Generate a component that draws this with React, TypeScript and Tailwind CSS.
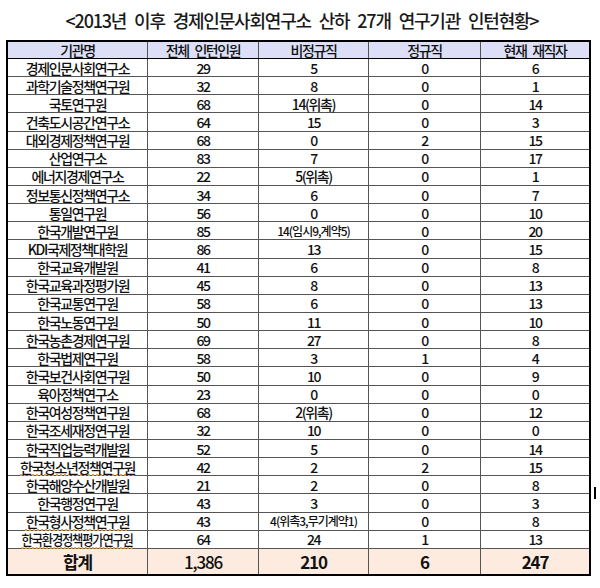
import React from "react";

type Row = [string, string, string, string, string];

const rows: Row[] = [
  ["경제인문사회연구소", "29", "5", "0", "6"],
  ["과학기술정책연구원", "32", "8", "0", "1"],
  ["국토연구원", "68", "14(위촉)", "0", "14"],
  ["건축도시공간연구소", "64", "15", "0", "3"],
  ["대외경제정책연구원", "68", "0", "2", "15"],
  ["산업연구소", "83", "7", "0", "17"],
  ["에너지경제연구소", "22", "5(위촉)", "0", "1"],
  ["정보통신정책연구소", "34", "6", "0", "7"],
  ["통일연구원", "56", "0", "0", "10"],
  ["한국개발연구원", "85", "14(임시9,계약5)", "0", "20"],
  ["KDI국제정책대학원", "86", "13", "0", "15"],
  ["한국교육개발원", "41", "6", "0", "8"],
  ["한국교육과정평가원", "45", "8", "0", "13"],
  ["한국교통연구원", "58", "6", "0", "13"],
  ["한국노동연구원", "50", "11", "0", "10"],
  ["한국농촌경제연구원", "69", "27", "0", "8"],
  ["한국법제연구원", "58", "3", "1", "4"],
  ["한국보건사회연구원", "50", "10", "0", "9"],
  ["육아정책연구소", "23", "0", "0", "0"],
  ["한국여성정책연구원", "68", "2(위촉)", "0", "12"],
  ["한국조세재정연구원", "32", "10", "0", "0"],
  ["한국직업능력개발원", "52", "5", "0", "14"],
  ["한국청소년정책연구원", "42", "2", "2", "15"],
  ["한국해양수산개발원", "21", "2", "0", "8"],
  ["한국행정연구원", "43", "3", "0", "3"],
  ["한국형사정책연구원", "43", "4(위촉3,무기계약1)", "0", "8"],
  ["한국환경정책평가연구원", "64", "24", "1", "13"],
];

const underlined = new Set(["한국청소년정책연구원", "한국형사정책연구원", "한국환경정책평가연구원"]);

const cols = "grid grid-cols-[140px_111px_110px_112px_108px]";
const cell = "flex items-center justify-center border-r border-[#555] last:border-r-0 whitespace-nowrap";

export default function App() {
  return (
    <div
      className="relative w-[600px] h-[588px] bg-white text-[#111]"
      style={{ fontFamily: '"Noto Sans CJK KR", "Noto Sans", sans-serif' }}
    >
      <div className="h-[40px] flex items-center justify-center pl-[4px] pb-[1px]">
        <span className="text-[18px] font-medium tracking-[-1.2px] [word-spacing:5px] leading-none text-[#1a1a1a]">
          &lt;2013년 이후 경제인문사회연구소 산하 27개 연구기관 인턴현황&gt;
        </span>
      </div>
      <div className="ml-[6px] w-[585px] border-2 border-black">
        <div className={`${cols} h-[17px] bg-[#dcdff6] border-b border-black text-[14px] font-medium tracking-[-1.4px] [word-spacing:4px] leading-none`}>
          <div className={cell}>기관명</div>
          <div className={cell}>전체 인턴인원</div>
          <div className={cell}>비정규직</div>
          <div className={cell}>정규직</div>
          <div className={cell}>현재 재직자</div>
        </div>
        {rows.map((r) => {
          const longName = r[0] === "한국환경정책평가연구원";
          const smallNote = r[2].length > 8;
          return (
            <div
              key={r[0]}
              className={`${cols} h-[18.15px] border-b border-[#555] text-[14px] font-medium tracking-[-1.4px] leading-none`}
            >
              <div className={cell}>
                <span
                  className={`inline-block ${longName ? "scale-x-[0.88]" : ""} ${
                    underlined.has(r[0])
                      ? "underline decoration-dotted decoration-[#e0a040] decoration-[1.5px] underline-offset-[2px]"
                      : ""
                  }`}
                >
                  {r[0]}
                </span>
              </div>
              <div className={cell}>{r[1]}</div>
              <div className={cell}>
                <span className={smallNote ? "text-[12px] tracking-[-1px]" : ""}>{r[2]}</span>
              </div>
              <div className={cell}>{r[3]}</div>
              <div className={cell}>{r[4]}</div>
            </div>
          );
        })}
        <div className={`${cols} h-[25px] bg-[#fdebdf] text-[17px] tracking-[-1.2px] leading-none`}>
          <div className={`${cell} font-bold`}>합계</div>
          <div className={`${cell} font-medium`}>1,386</div>
          <div className={`${cell} font-bold`}>210</div>
          <div className={`${cell} font-bold`}>6</div>
          <div className={`${cell} font-bold`}>247</div>
        </div>
      </div>
      <div className="absolute left-[594px] top-[487px] w-[2px] h-[12px] bg-black" />
    </div>
  );
}
